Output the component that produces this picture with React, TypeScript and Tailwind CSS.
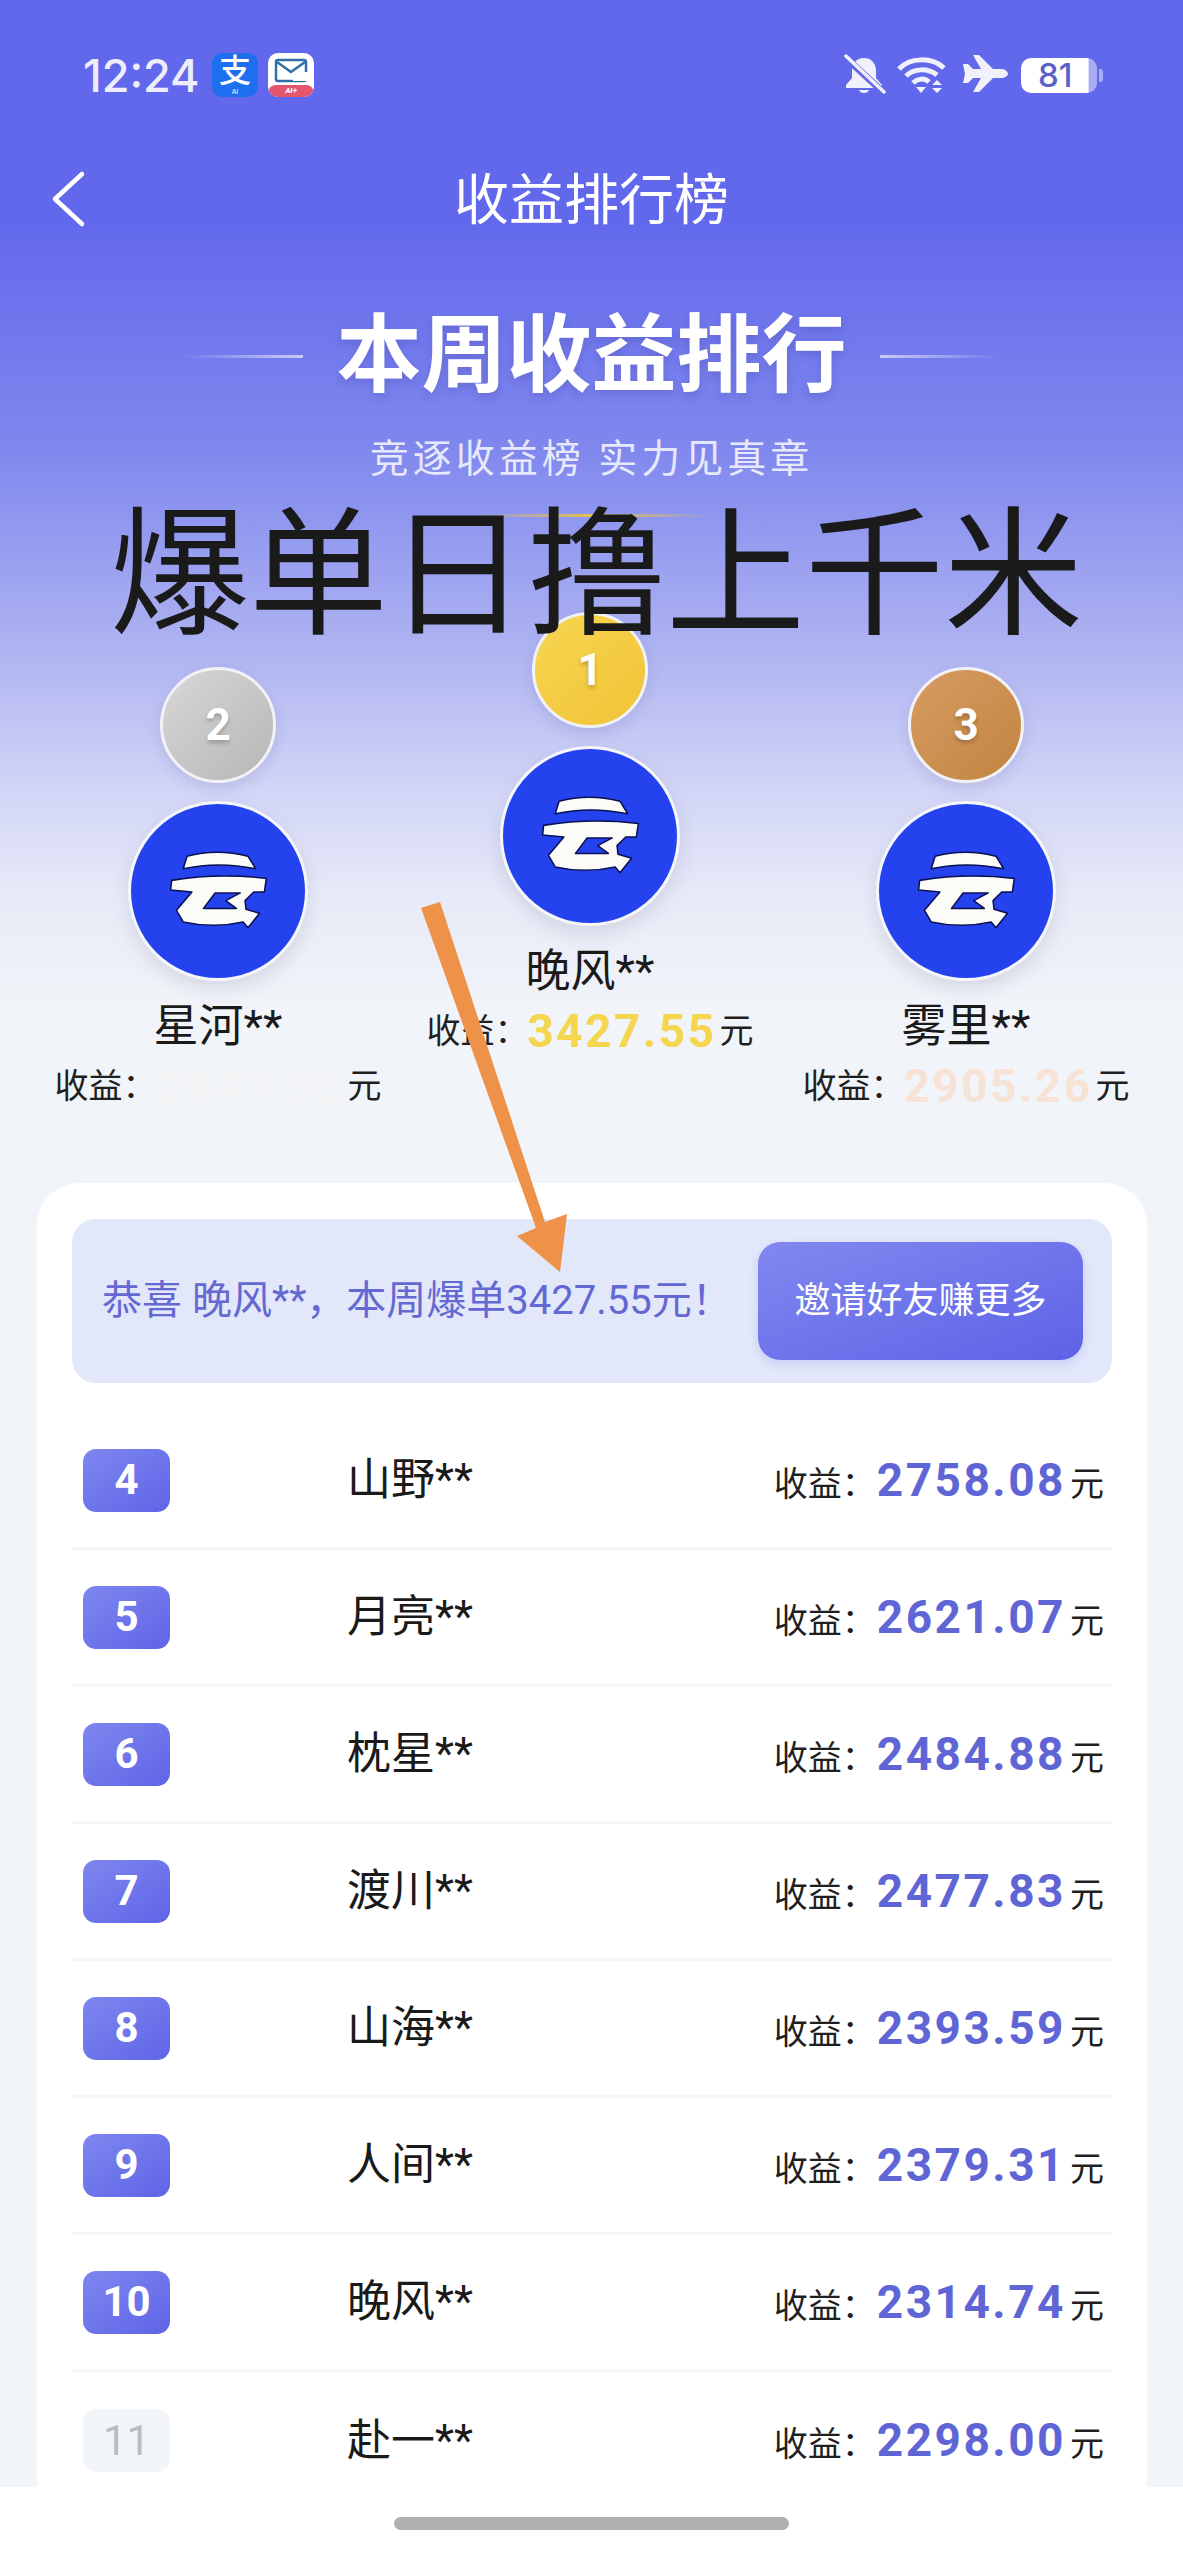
const FONT = "font-['Roboto','Noto_Sans_CJK_SC',sans-serif]";

function YunLogo() {
  return (
    <svg viewBox="0 0 180 180" className="w-full h-full">
      <g fill="#fbfbf8" stroke="#0a1150" strokeWidth="1.6" strokeLinejoin="round">
        <path d="M54 67 L58 54 Q89 46 121 54 L129 67 Q90 59 54 67 Z" />
        <path
          fillRule="evenodd"
          d="M42 79 Q90 71 140 77 L138 91 L127 91 L118 100 L119 109 L133 113 L121 128 L116 122 Q85 129 54 122 L47 110 L63 91 L41 89 Z M87 92 L113 92 L98 100 L109 108 L75 108 Z"
        />
      </g>
    </svg>
  );
}

function Avatar({ grad, n, shift }: { grad: string; n: string; shift: string }) {
  return (
    <div className={`flex flex-col items-center ${shift}`}>
      <div
        className={`w-[116px] h-[116px] rounded-full border-[3px] border-[#f1f1f6] flex items-center justify-center text-white font-bold text-[44px] leading-none shadow-[0_6px_14px_rgba(90,90,160,0.18)] [text-shadow:0_3px_4px_rgba(0,0,0,0.22)] ${grad}`}
      >
        {n}
      </div>
      <div className="mt-[18px] w-[180px] h-[180px] rounded-full bg-[#2443ee] border-[3px] border-[#f5f6fa] shadow-[0_8px_18px_rgba(90,90,130,0.16)] overflow-hidden">
        <YunLogo />
      </div>
    </div>
  );
}

function Podium({ grad, n, name, value, color, shift }: { grad: string; n: string; name: string; value: string; color: string; shift: string }) {
  return (
    <div className="w-[372px] flex flex-col items-center">
      <Avatar grad={grad} n={n} shift={shift} />
      <div className="mt-[20px] h-[52px] text-[45px] leading-[52px] text-[#1a1a1a]">{name}</div>
      <div className="mt-[5px] h-[56px] flex items-center whitespace-nowrap text-[34px] text-[#1f1f1f]">
        <span>收益：</span>
        <span className={`ml-[-1px] font-bold text-[46px] leading-none tracking-[2.5px] ${color}`}>{value}</span>
        <span className="ml-[3px]">元</span>
      </div>
    </div>
  );
}

function Row({ n, name, value, dim }: { n: string; name: string; value: string; dim?: boolean }) {
  return (
    <div className={`h-[137px] pl-[11px] pr-[8px] flex items-center ${dim ? "" : "border-b-[3px] border-[#f5f6f8]"}`}>
      <div
        className={`w-[87px] h-[63px] rounded-[13px] flex items-center justify-center font-bold text-[42px] leading-none ${
          dim ? "bg-[#f2f5f9] text-[#b9bdc3] font-normal" : "bg-gradient-to-br from-[#7f86ef] to-[#5f64e6] text-white"
        }`}
      >
        {n}
      </div>
      <div className="ml-[177px] text-[44px] leading-none text-[#1a1a1a]">{name}</div>
      <div className="ml-auto flex items-center whitespace-nowrap text-[34px] text-[#1f1f1f] pt-[8px]">
        <span>收益：</span>
        <span className="ml-[1px] font-bold text-[46px] leading-none tracking-[2.5px] text-[#6065d6] mt-[-9px]">{value}</span>
        <span className="ml-[4px]">元</span>
      </div>
    </div>
  );
}

export default function App() {
  const rows = [
    ["4", "山野**", "2758.08"],
    ["5", "月亮**", "2621.07"],
    ["6", "枕星**", "2484.88"],
    ["7", "渡川**", "2477.83"],
    ["8", "山海**", "2393.59"],
    ["9", "人间**", "2379.31"],
    ["10", "晚风**", "2314.74"],
  ];
  return (
    <div className={`relative w-[1183px] h-[2560px] overflow-hidden ${FONT} bg-[linear-gradient(180deg,#6268ec_0px,#6268ec_220px,#8088ee_450px,#acb1f1_640px,#d2d5f6_790px,#e8ebf7_900px,#f1f4f8_1010px,#f1f4f8_100%)]`}>
      {/* status bar */}
      <div className="h-[150px] pl-[83px] pr-[80px] flex items-center text-white">
        <span className="font-['Inter',sans-serif] text-[45px] font-medium leading-none text-[#eeeefb] w-[122px] whitespace-nowrap">12:24</span>
        <div className="ml-[7px] w-[46px] h-[44px] rounded-[10px] bg-[#1d6ff0] flex flex-col items-center justify-center overflow-hidden">
          <span className="text-white text-[32px] leading-[34px] font-medium">支</span>
          <span className="text-white text-[7px] leading-[8px]">AI</span>
        </div>
        <div className="ml-[10px] w-[46px] h-[44px] rounded-[10px] bg-white flex flex-col items-center overflow-hidden">
          <svg viewBox="0 0 46 32" className="w-[46px] h-[32px]">
            <rect x="8" y="7" width="30" height="21" rx="2" fill="none" stroke="#2f6fa8" strokeWidth="2.5" />
            <path d="M9 9 L23 19 L37 9" fill="none" stroke="#2f6fa8" strokeWidth="2.5" />
            <rect x="25" y="19" width="16" height="9" fill="#fff" />
          </svg>
          <div className="w-full h-[12px] bg-[#e4566e] rounded-t-[8px] text-white text-[8px] leading-[12px] font-bold italic text-center">AI+</div>
        </div>
        <div className="ml-auto flex items-center">
          <svg viewBox="0 0 44 42" className="w-[44px] h-[42px]" fill="#f1f1fb">
            <path d="M22 4 C14 4 10 10 10 17 L10 24 L4 31 L4 34 L40 34 L40 31 L34 24 L34 17 C34 10 30 4 22 4 Z" />
            <path d="M17 36 H27 C26 40 18 40 17 36 Z" />
            <path d="M3 3 L41 38" stroke="#6268ec" strokeWidth="7" />
            <path d="M4 2 L42 38" stroke="#f1f1fb" strokeWidth="3.5" strokeLinecap="round" />
          </svg>
          <svg viewBox="0 0 56 42" className="ml-[10px] w-[56px] h-[42px]" fill="none" stroke="#f1f1fb" strokeWidth="5">
            <path d="M3 15 C14 3 36 3 48 14" />
            <path d="M10 22 C18 14 32 14 41 21" />
            <path d="M17 29 C22 24 29 24 33 28" />
            <path d="M20 33 L30 33 L25 39 Z" fill="#f1f1fb" stroke="none" />
            <path d="M41 26 L46 31 L36 31 Z M36 34 L46 34 L41 39 Z" fill="#f1f1fb" stroke="none" />
          </svg>
          <svg viewBox="0 0 48 42" className="ml-[9px] w-[48px] h-[42px]" fill="#f1f1fb">
            <path d="M2 10 L7 10 L12 15 L20 15 L12 1 L18 1 L32 15 L42 15 Q47 17 47 20 Q47 22 42 24 L32 24 L18 38 L12 38 L20 24 L12 24 L7 29 L2 29 L4 20 Z" />
          </svg>
          <div className="ml-[12px] w-[82px] h-[35px] flex items-center">
            <div className="w-[76px] h-[35px] rounded-[10px] bg-[linear-gradient(90deg,#ffffff_0%,#ffffff_88%,#a9acf3_90%)] flex items-center pl-[17px] text-[#5a60c8] text-[33px] font-medium leading-none font-['Inter',sans-serif]">
              81
            </div>
            <div className="ml-[2px] w-[4px] h-[13px] rounded-r-[3px] bg-[#a9acf3]" />
          </div>
        </div>
      </div>

      {/* navigation */}
      <div className="h-[98px] pl-[50px] flex items-center relative">
        <svg viewBox="0 0 36 60" className="w-[36px] h-[60px]" fill="none" stroke="#ffffff" strokeWidth="4.5" strokeLinecap="round" strokeLinejoin="round">
          <path d="M32 5 L5 30 L32 55" />
        </svg>
        <div className="flex-1 text-center text-white text-[55px] leading-none pr-[86px] pt-[3px]">收益排行榜</div>
      </div>

      {/* heading */}
      <div className="mt-[58px] h-[100px] flex items-center justify-center">
        <div className="w-[120px] h-[3px] bg-gradient-to-r from-transparent to-[#c8ccf8]" />
        <div className="mx-[33px] text-white font-bold text-[85px] leading-none whitespace-nowrap [text-shadow:0_4px_8px_rgba(60,60,140,0.25)]">本周收益排行</div>
        <div className="w-[120px] h-[3px] bg-gradient-to-l from-transparent to-[#c8ccf8]" />
      </div>
      <div className="mt-[30px] text-center text-[#e7e8fb] text-[39px] leading-[46px] tracking-[4px]">竞逐收益榜 实力见真章</div>
      <div className="mx-auto mt-[32px] w-[240px] h-[3px] bg-gradient-to-r from-transparent via-[#e2c14e] to-transparent" />

      {/* podium */}
      <div className="mt-[95px] pl-[32px] flex items-start">
        <Podium grad="bg-gradient-to-br from-[#d8d8d8] to-[#b6b6b6]" n="2" name="星河**" value="2943.93" color="text-[#f5f5f6]" shift="mt-[55px]" />
        <Podium grad="bg-gradient-to-br from-[#f6d650] to-[#f2c336]" n="1" name="晚风**" value="3427.55" color="text-[#f5d64e]" shift="" />
        <div className="ml-[4px]">
          <Podium grad="bg-gradient-to-br from-[#d79c62] to-[#c28440]" n="3" name="雾里**" value="2905.26" color="text-[#f7e3d6]" shift="mt-[55px]" />
        </div>
      </div>

      {/* card */}
      <div className="absolute left-[37px] top-[1183px] w-[1110px] h-[1400px] rounded-t-[42px] bg-white px-[35px] pt-[36px]">
        <div className="h-[164px] rounded-[24px] bg-[#e2e7fa] pl-[30px] pr-[29px] flex items-center">
          <div className="text-[40px] leading-none text-[#6468d2] whitespace-nowrap">恭喜 晚风**，本周爆单3427.55元！</div>
          <div className="ml-auto w-[325px] h-[118px] rounded-[22px] bg-gradient-to-br from-[#8288ef] to-[#5d62e6] flex items-center justify-center text-white text-[36px] shadow-[0_4px_10px_rgba(95,100,230,0.2)]">
            邀请好友赚更多
          </div>
        </div>
        <div className="mt-[30px]">
          {rows.map((r) => (
            <Row key={r[0]} n={r[0]} name={r[1]} value={r[2]} />
          ))}
          <Row n="11" name="赴一**" value="2298.00" dim />
        </div>
      </div>

      {/* overlay caption */}
      <div className="absolute left-[10px] right-0 top-[494px] text-center text-[139px] leading-[164px] text-[#1a1a1a] whitespace-nowrap">爆单日撸上千米</div>

      {/* annotation arrow */}
      <svg className="absolute left-0 top-0 pointer-events-none" width="1183" height="2560" fill="#ee9249">
        <path d="M421 908 L440 902 L545 1222 L567 1214 L560 1272 L517 1236 L536 1228 Z" />
      </svg>

      {/* home bar */}
      <div className="absolute left-0 right-0 bottom-0 h-[73px] bg-white flex justify-center pt-[30px]">
        <div className="w-[395px] h-[13px] rounded-full bg-[#b0b0b0]" />
      </div>
    </div>
  );
}
